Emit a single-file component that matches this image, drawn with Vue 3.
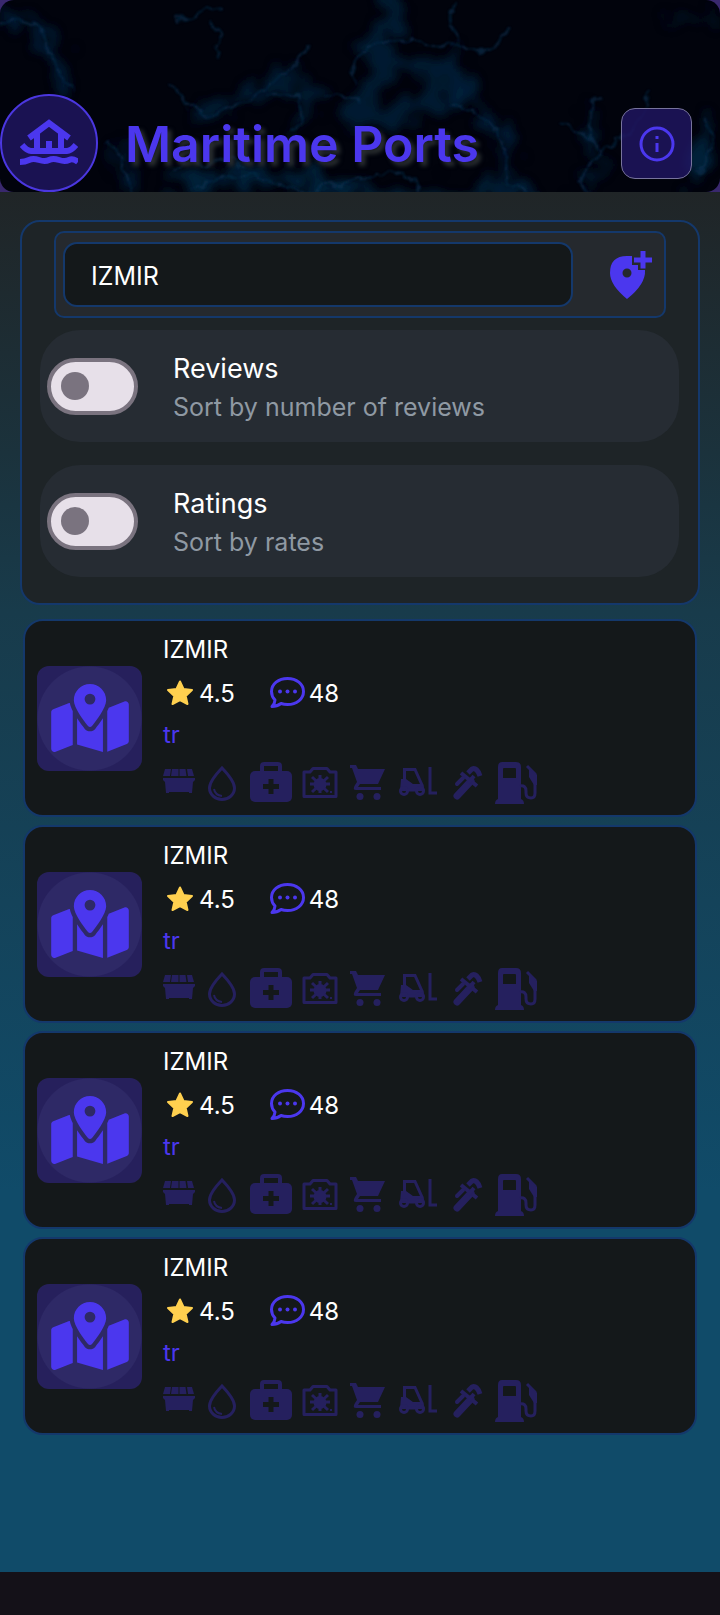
<script setup>
import { ref } from 'vue'

const query = ref('IZMIR')
const filters = ref([
  { id: 'reviews', title: 'Reviews', hint: 'Sort by number of reviews', on: false },
  { id: 'ratings', title: 'Ratings', hint: 'Sort by rates', on: false },
])
const ports = ref([1, 2, 3, 4].map((id) => ({ id, name: 'IZMIR', rating: '4.5', reviews: 48, country: 'tr' })))
</script>

<template>
  <div class="page">
    <header class="hero">
      <svg class="marble" viewBox="0 0 720 192" preserveAspectRatio="xMidYMid slice" aria-hidden="true">
        <defs>
          <filter id="rough" x="-10%" y="-10%" width="120%" height="120%">
            <feTurbulence type="fractalNoise" baseFrequency="0.05" numOctaves="4" seed="7" result="n" />
            <feDisplacementMap in="SourceGraphic" in2="n" scale="18" xChannelSelector="R" yChannelSelector="G" />
            <feGaussianBlur stdDeviation="1" />
          </filter>
          <filter id="haze" x="-20%" y="-20%" width="140%" height="140%">
            <feTurbulence type="fractalNoise" baseFrequency="0.05" numOctaves="5" seed="3" result="n" />
            <feDisplacementMap in="SourceGraphic" in2="n" scale="50" xChannelSelector="R" yChannelSelector="G" />
            <feGaussianBlur stdDeviation="4" />
          </filter>
        </defs>
        <g filter="url(#haze)" fill="none" stroke="#05233f" stroke-linecap="round">
          <path d="M0 14Q35 14 48 45T68 90" stroke-width="11" opacity=".8" />
          <path d="M385 0Q405 20 380 40T430 70T410 108T380 80" stroke-width="22" opacity=".75" />
          <path d="M200 112Q250 100 285 80T300 125" stroke-width="16" opacity=".7" />
          <path d="M450 50Q440 85 480 112T505 165T530 192" stroke-width="9" opacity=".8" />
          <path d="M180 190Q260 165 330 185T520 190" stroke-width="16" opacity=".9" />
          <path d="M708 125Q704 145 695 175" stroke-width="14" opacity=".9" />
          <path d="M670 15Q690 25 710 25" stroke-width="10" opacity=".4" />
          <path d="M118 145Q125 170 130 188" stroke-width="9" opacity=".8" />
          <path d="M590 105Q582 130 595 150T580 190" stroke-width="8" opacity=".7" />
        </g>
        <g filter="url(#rough)" fill="none" stroke="#0a3557" stroke-width="2" stroke-linecap="round" opacity=".6">
          <path d="M2 24Q32 8 48 45T72 95" />
          <path d="M178 20Q205 10 225 8M215 25Q225 40 218 58" />
          <path d="M170 85Q190 105 205 112T255 95T310 45" />
          <path d="M270 95Q300 85 303 110T290 130M325 95Q345 90 360 100" />
          <path d="M355 85Q345 55 375 45T450 48T510 25M455 0Q450 25 460 45" />
          <path d="M450 105Q480 105 495 130T510 175T540 192" />
          <path d="M600 98Q582 115 590 132T600 150T580 180L590 192M600 150L635 128L650 90" />
          <path d="M110 145Q125 155 132 190M175 175Q200 150 245 165" />
          <path d="M190 192Q230 165 270 182T360 178T420 192" />
          <path d="M560 125Q580 130 600 145M705 120Q720 145 695 175" />
        </g>
      </svg>
      <div class="logo">
        <svg viewBox="20 118 58 48" width="58" height="48" fill="none" stroke="#4b37ee" aria-hidden="true">
          <path d="M29 137L49 122L69 137" stroke-width="6" stroke-linejoin="miter" />
          <path d="M37 132V150M61 132V150" stroke-width="6" />
          <path d="M46 140H52V150H46Z" fill="#4b37ee" stroke="none" />
          <path d="M22 144Q27 150 31 150H67Q71 150 76 144" stroke-width="6" />
          <path d="M20 161Q25 161 29 159T39 159T49 159T59 159T69 159T78 161" stroke-width="6" />
        </svg>
      </div>
      <h1>Maritime Ports</h1>
      <button class="info" type="button" aria-label="Information">
        <svg viewBox="0 0 36 36" width="36" height="36" fill="none" stroke="#4b37ee" stroke-width="3" aria-hidden="true">
          <circle cx="18" cy="18" r="16" />
          <path d="M18 17V26M18 10V13" />
        </svg>
      </button>
    </header>

    <main>
      <section class="panel">
        <div class="search">
          <input v-model="query" type="text" aria-label="Port name" />
          <button class="add" type="button" aria-label="Add location">
            <svg viewBox="610 250 42 48" width="42" height="48" fill="#4b37ee" aria-hidden="true">
              <path fill-rule="evenodd" d="M632 255V264H638V269H645Q646 283 627 298Q610 284 610 272Q610 255 627 255ZM627 267.500a4.500 4.500 0 1 0 0 9a4.500 4.500 0 1 0 0-9Z" />
              <path d="M640.500 250H645.500V256.500H652V261.500H645.500V267.500H640.500V261.500H634V256.500H640.500Z" />
            </svg>
          </button>
        </div>
        <label v-for="f in filters" :key="f.id" class="filter" :for="f.id">
          <input :id="f.id" v-model="f.on" type="checkbox" role="switch" />
          <span class="words">
            <span class="title">{{ f.title }}</span>
            <span class="hint">{{ f.hint }}</span>
          </span>
        </label>
      </section>

      <section class="list">
        <article v-for="p in ports" :key="p.id" class="card">
          <div class="thumb">
            <svg viewBox="0 0 576 512" width="78" height="69" fill="#4b37ee" aria-hidden="true">
              <path fill-rule="evenodd" d="M408 120c0 54.6-73.1 151.900-105.200 192c-7.700 9.600-22 9.600-29.600 0C241.100 271.900 168 174.600 168 120C168 53.700 221.700 0 288 0s120 53.700 120 120zm8 80.400c3.500-6.900 6.700-13.800 9.600-20.600c.5-1.200 1-2.500 1.500-3.700l116-46.400C558.900 123.400 576 135 576 152V422.800c0 9.800-6 18.600-15.100 22.300L416 503V200.400zM137.600 138.300c2.400 14.100 7.200 28.300 12.800 41.500c2.900 6.800 6.100 13.700 9.600 20.600V451.800L32.900 502.700C17.100 509 0 497.400 0 480.400V209.600c0-9.800 6-18.600 15.100-22.300l122.600-49zM327.800 332c13.900-17.400 35.700-45.700 56.200-77V504.300L192 449.400V255c20.500 31.300 42.300 59.600 56.200 77c20.500 25.600 59.100 25.600 79.600 0zM288 152a40 40 0 1 0 0-80 40 40 0 1 0 0 80z" />
            </svg>
          </div>
          <div class="details">
            <h2>{{ p.name }}</h2>
            <div class="stats">
              <span class="stat">
                <svg viewBox="163 677 34 28" width="34" height="28" aria-hidden="true">
                  <path d="M180 679.500L183.500 687L192 688L185.700 694L187.500 702L180 698L172.500 702L174.300 694L168 688L176.500 687Z" fill="#ffd04f" stroke="#ffd04f" stroke-width="2" stroke-linejoin="round" />
                </svg>
                {{ p.rating }}
              </span>
              <span class="stat">
                <svg viewBox="269 675 38 34" width="38" height="34" fill="none" stroke="#4b37ee" stroke-width="3" stroke-linejoin="round" aria-hidden="true">
                  <path d="M275 699Q271.500 695.500 271.500 690.500C271.500 683 278.500 677.500 287.500 677.500S303.500 683 303.500 690.500S296.500 703.500 287.500 703.500Q284 703.500 281 702.500Q277 705.500 272 705.500Q275 702 275 699Z" />
                  <g fill="#4b37ee" stroke="none">
                    <circle cx="280" cy="690.500" r="2" />
                    <circle cx="287.500" cy="690.500" r="2" />
                    <circle cx="295" cy="690.500" r="2" />
                  </g>
                </svg>
                {{ p.reviews }}
              </span>
            </div>
            <p class="country">{{ p.country }}</p>
            <div class="services">
              <svg viewBox="0 0 39 42" width="39" height="42" fill="#25205e" role="img" aria-label="Market">
                <path d="M2 7H8L7 14H0ZM9 7H15.500V14H8ZM16.500 7H22.500L23.500 14H16.500ZM24 7H29L31 14H25Z" />
                <path d="M0 16H32V18L30 20L29 31H26V30H6V31H3L2 20L0 18Z" />
              </svg>
              <svg viewBox="39 0 41 42" width="41" height="42" fill="none" stroke="#25205e" stroke-width="3" role="img" aria-label="Water">
                <path d="M59 6Q46.500 19 46.500 26A12.500 11.500 0 0 0 71.500 26Q71.500 19 59 6Z" />
                <path d="M51 27Q52 33 59 34" stroke-width="2" />
              </svg>
              <svg viewBox="80 0 54 42" width="54" height="42" role="img" aria-label="Medical">
                <path d="M99 10V4Q99 2 101 2H115Q117 2 117 4V10" fill="none" stroke="#25205e" stroke-width="4" />
                <rect x="87" y="9" width="42" height="31" rx="5" fill="#25205e" />
                <path d="M105.500 17H110.500V22H116V27H110.500V32H105.500V27H100V22H105.500Z" fill="#14181a" />
              </svg>
              <svg viewBox="134 0 47 42" width="47" height="42" fill="none" stroke="#25205e" stroke-width="3" role="img" aria-label="Camera">
                <path d="M141 10H147L150 6.500H164L167 10H173V34.500H141Z" stroke-linejoin="round" />
                <path d="M157 13V31M149 15L165 30M149 30L165 15M147 22H167" stroke-width="3" />
                <circle cx="157" cy="22.500" r="6.500" fill="#25205e" stroke="none" />
                <path d="M167 29h2v2h-2Z" fill="#25205e" stroke="none" />
              </svg>
              <svg viewBox="181 0 48 42" width="48" height="42" fill="#25205e" role="img" aria-label="Shopping">
                <path d="M187 3H193L195 7H222L215 22H197L195 25H218V28H193Q189 28 192 23L194 20L189 6H187Z" />
                <circle cx="197" cy="34.500" r="3.500" />
                <circle cx="214" cy="34.500" r="3.500" />
              </svg>
              <svg viewBox="229 0 53 42" width="53" height="42" fill="none" stroke="#25205e" stroke-width="3" role="img" aria-label="Forklift">
                <path d="M241.500 19V7.500H252L259 23V28" />
                <path d="M238 17H243L250 22H260L262 29H237Z" fill="#25205e" stroke="none" />
                <circle cx="241" cy="29" r="3.500" />
                <circle cx="257" cy="29" r="3.500" />
                <path d="M245 28H253" />
                <path d="M267 5V31H274" />
              </svg>
              <svg viewBox="282 0 43 42" width="43" height="42" fill="none" stroke="#25205e" role="img" aria-label="Repair">
                <path d="M294 34L308 19" stroke-width="7" stroke-linecap="round" />
                <path d="M298 11L314 24" stroke-width="4" />
                <path d="M294 22L300 16" stroke-width="4" stroke-linecap="round" />
                <path d="M305 11L309 7Q314 5 317 14" stroke-width="5" stroke-linejoin="round" />
                <path d="M305 21L311 14" stroke-width="4" />
              </svg>
              <svg viewBox="325 0 52 42" width="52" height="42" role="img" aria-label="Fuel">
                <path fill="#25205e" fill-rule="evenodd" d="M339 0H353Q358 0 358 5V37Q361 38 361 42H332Q332 38 335 37V5Q335 0 339 0ZM340 7Q340 6 341 6H352Q353 6 353 7V16H340Z" />
                <path d="M357 24Q363 23 363 29V31Q363 36 368 36Q372 36 372 31V12L364 4" fill="none" stroke="#25205e" stroke-width="3" />
                <path d="M366 6L374 13V23H371L366 15Z" fill="#25205e" />
              </svg>
            </div>
          </div>
        </article>
      </section>
    </main>
    <footer class="bar"></footer>
  </div>
</template>

<style>
body {
  margin: 0;
  background: #141118;
}
</style>

<style scoped>
* {
  box-sizing: border-box;
}
.page {
  min-height: 100vh;
  display: flex;
  flex-direction: column;
  background: #39286e;
  color: #fff;
  font-family: Inter, "Liberation Sans", sans-serif;
  font-size: 24px;
}
.hero {
  position: relative;
  height: 192px;
  flex: none;
  display: flex;
  align-items: flex-end;
  padding-right: 28px;
  border-radius: 14px;
  overflow: hidden;
  background: #01030c;
}
.marble {
  position: absolute;
  inset: 0;
  width: 100%;
  height: 100%;
}
.logo {
  position: relative;
  width: 98px;
  height: 98px;
  flex: none;
  display: flex;
  align-items: center;
  justify-content: center;
  border: 2px solid #4b37e0;
  border-radius: 50%;
  background: rgba(32, 22, 100, .8);
}
h1 {
  position: relative;
  flex: 1;
  margin: 0 0 16px 27px;
  font-size: 50px;
  line-height: 64px;
  font-weight: 600;
  color: #4b37ee;
  text-shadow: 4px 4px 4px #2a2f31;
  white-space: nowrap;
}
button {
  display: flex;
  align-items: center;
  justify-content: center;
  padding: 0;
  border: 0;
  background: none;
  cursor: pointer;
}
.info {
  position: relative;
  width: 71px;
  height: 71px;
  margin-bottom: 13px;
  border: 1px solid #77739c;
  border-radius: 14px;
  background: rgba(32, 22, 100, .8);
}
main {
  flex: 1;
  padding: 28px 20px 0;
  background: linear-gradient(#202527 0, #1b323c 260px, #183b4b 420px, #104b69 1000px);
}
.panel {
  display: flex;
  flex-direction: column;
  gap: 23px;
  padding: 9px 19px 26px 18px;
  border: 2px solid #14386b;
  border-radius: 20px;
  background: #1e2427;
}
.search {
  display: flex;
  align-items: center;
  margin: 0 13px -11px 14px;
  padding: 9px 12px 9px 7px;
  border: 2px solid #14386b;
  border-radius: 10px;
  background: #25292e;
}
.search input {
  flex: 1;
  min-width: 0;
  height: 65px;
  margin-right: 37px;
  padding: 2px 26px 0;
  border: 2px solid #14386b;
  border-radius: 14px;
  background: #14181a;
  color: #fff;
  font: inherit;
  font-size: 25px;
  outline: none;
}
.filter {
  display: flex;
  align-items: center;
  height: 112px;
  padding-left: 7px;
  border-radius: 40px;
  background: #262c33;
}
.filter input {
  appearance: none;
  flex: none;
  display: flex;
  align-items: center;
  width: 91px;
  height: 57px;
  margin: 0 35px 0 0;
  padding-left: 10px;
  border: 4px solid #7a737f;
  border-radius: 29px;
  background: #e7e0e9;
}
.filter input::before {
  content: "";
  width: 28px;
  height: 28px;
  border-radius: 50%;
  background: #7a737f;
}
.filter input:checked {
  justify-content: flex-end;
  padding-right: 10px;
}
.words {
  display: flex;
  flex-direction: column;
  padding-top: 2px;
}
.title {
  font-size: 27px;
  line-height: 40px;
}
.hint {
  font-size: 25px;
  line-height: 36px;
  color: #8f99a3;
}
.list {
  display: flex;
  flex-direction: column;
  gap: 8px;
  padding: 14px 3px 0;
}
.card {
  display: flex;
  align-items: center;
  gap: 21px;
  height: 198px;
  padding-left: 12px;
  border: 2px solid #14386b;
  border-radius: 20px;
  background: #14181a;
}
.thumb {
  flex: none;
  display: flex;
  align-items: center;
  justify-content: center;
  width: 105px;
  height: 105px;
  border-radius: 12px;
  background: radial-gradient(circle closest-side, #2e2966 98%, #26205c 100%);
}
.details {
  flex: 1;
}
h2,
.country {
  margin: 0;
  font-size: 24px;
  line-height: 44px;
  font-weight: 400;
}
.country {
  line-height: 42px;
  color: #4b37ee;
}
.stats {
  display: flex;
  gap: 34px;
  height: 42px;
}
.stat {
  display: flex;
  align-items: center;
  gap: 2px;
}
.services {
  display: flex;
  padding: 6px 0 4px;
}
.services svg {
  flex: none;
}
.bar {
  flex: none;
  height: 43px;
  background: #141118;
}
</style>
